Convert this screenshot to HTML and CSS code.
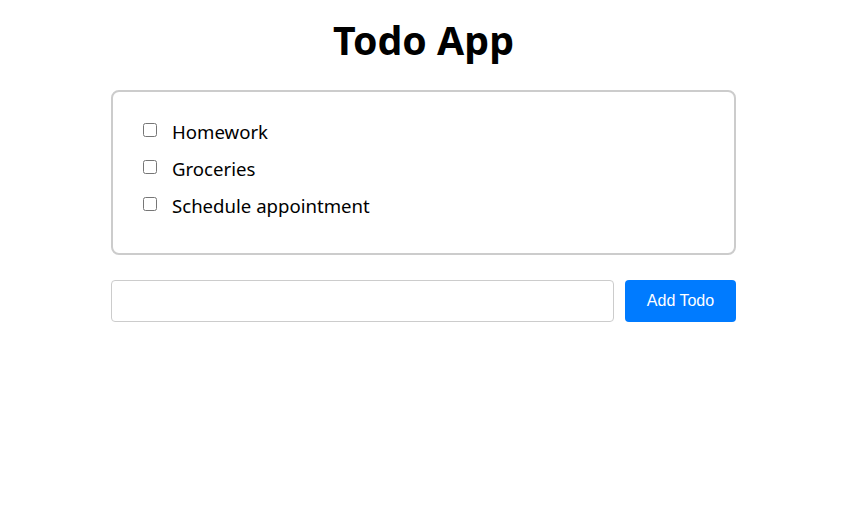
FILE: index.html
```html
<!DOCTYPE html>
<html lang="en">
<head>
<meta charset="utf-8">
<title>Todo App</title>
<link rel="stylesheet" href="styles.css">
</head>
<body>
<div class="app">
  <h1 class="title">Todo App</h1>
  <div class="list-box">
    <ul class="todo-list">
      <li class="todo-item"><input type="checkbox" class="todo-check"><span class="todo-text">Homework</span></li>
      <li class="todo-item"><input type="checkbox" class="todo-check"><span class="todo-text">Groceries</span></li>
      <li class="todo-item"><input type="checkbox" class="todo-check"><span class="todo-text">Schedule appointment</span></li>
    </ul>
  </div>
  <div class="add-row">
    <input type="text" class="add-input">
    <button class="add-btn">Add Todo</button>
  </div>
</div>
</body>
</html>
```

FILE: styles.css
```css
html, body {
  margin: 0;
  padding: 0;
  background: #fff;
}
body {
  font-family: "Noto Sans", "Open Sans", sans-serif;
  color: #000;
  padding-right: 1px;
}
.app {
  width: 625px;
  margin: 0 auto;
  padding-top: 13px;
}
.title {
  margin: 0 0 23px;
  text-align: center;
  font-size: 39.3px;
  font-weight: 700;
  line-height: 54px;
}
.list-box {
  border: 2px solid #ccc;
  border-radius: 8px;
  padding: 26px 30px 24px;
}
.todo-list {
  list-style: none;
  margin: 0;
  padding: 0;
}
.todo-item {
  display: flex;
  align-items: center;
  height: 27px;
  margin-bottom: 10px;
  font-size: 18.6px;
}
.todo-check {
  width: 14px;
  height: 14px;
  margin: -4px 15px 0 0;
}
.add-row {
  display: flex;
  gap: 11px;
  margin-top: 25px;
}
.add-input {
  flex: 1;
  height: 42px;
  box-sizing: border-box;
  border: 1px solid #ccc;
  border-radius: 4px;
  margin: 0;
  padding: 0 10px;
  font-size: 16px;
}
.add-btn {
  width: 111px;
  height: 42px;
  border: none;
  border-radius: 4px;
  background: #007bff;
  color: #fff;
  font-family: "Liberation Sans", Arial, sans-serif;
  font-size: 16px;
  margin: 0;
}
```
